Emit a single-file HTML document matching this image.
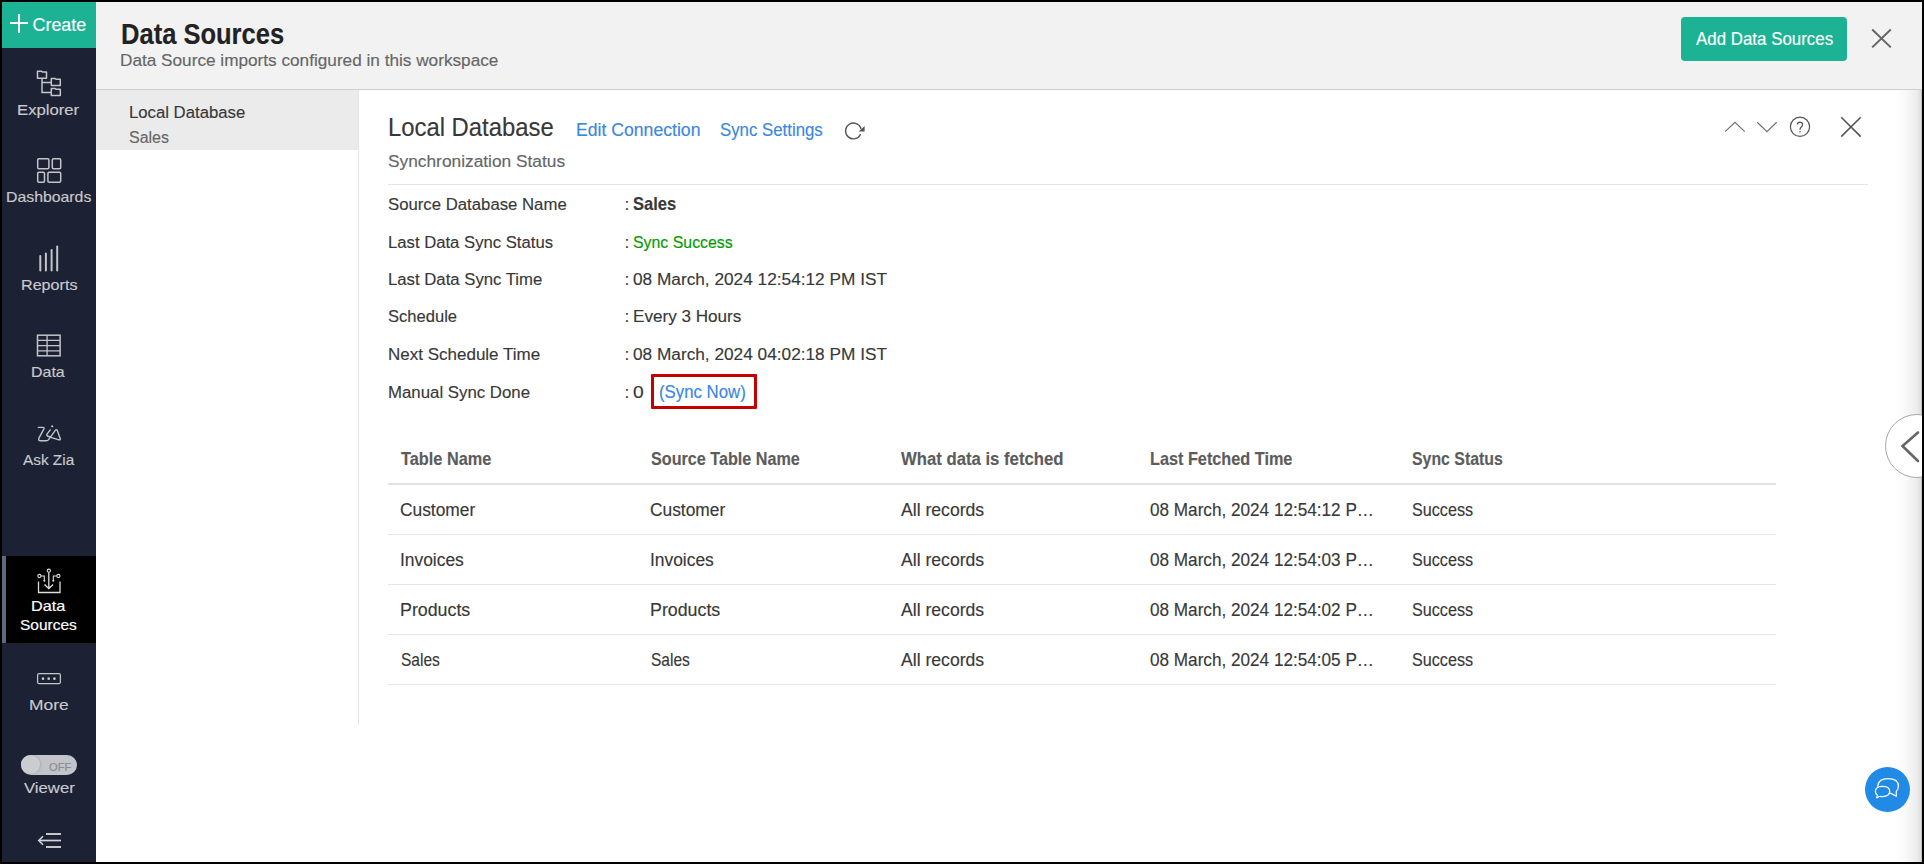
<!DOCTYPE html>
<html><head><meta charset="utf-8"><style>
html,body{margin:0;padding:0;width:1924px;height:864px;overflow:hidden;background:#fff;position:relative}
.t{position:absolute;font-family:"Liberation Sans",sans-serif;white-space:nowrap;transform-origin:0 0;-webkit-text-stroke:0.15px currentColor}
</style></head><body>
<div style="position:absolute;left:2px;top:2px;width:94px;height:860px;background:#1c2134"></div>
<div style="position:absolute;left:2px;top:2px;width:94px;height:46px;background:#1cb294"></div>
<div style="position:absolute;left:10px;top:22px;width:18px;height:2px;background:#fff"></div>
<div style="position:absolute;left:18px;top:14px;width:2px;height:19px;background:#fff"></div>
<div class="t" style="left:32.60px;top:17px;font-size:17.86px;line-height:17.86px;color:#fff;transform:scaleX(1.0000);">Create</div>
<div style="position:absolute;left:2px;top:556px;width:94px;height:87px;background:#000"></div>
<div style="position:absolute;left:2px;top:556px;width:4px;height:87px;background:#5b6b7c"></div>
<div class="t" style="left:17.15px;top:103px;font-size:14.51px;line-height:14.51px;color:#c9cacd;transform:scaleX(1.1509);">Explorer</div>
<div class="t" style="left:5.81px;top:190px;font-size:14.51px;line-height:14.51px;color:#c9cacd;transform:scaleX(1.0909);">Dashboards</div>
<div class="t" style="left:20.85px;top:278px;font-size:14.09px;line-height:14.09px;color:#c9cacd;transform:scaleX(1.1458);">Reports</div>
<div class="t" style="left:31.40px;top:365px;font-size:14.51px;line-height:14.51px;color:#c9cacd;transform:scaleX(1.1000);">Data</div>
<div class="t" style="left:22.80px;top:453px;font-size:14.65px;line-height:14.65px;color:#c9cacd;transform:scaleX(1.0490);">Ask Zia</div>
<div class="t" style="left:31.28px;top:599px;font-size:14.51px;line-height:14.51px;color:#fff;transform:scaleX(1.1200);">Data</div>
<div class="t" style="left:20.33px;top:618px;font-size:14.51px;line-height:14.51px;color:#fff;transform:scaleX(1.0692);">Sources</div>
<div class="t" style="left:28.64px;top:697px;font-size:15.07px;line-height:15.07px;color:#c9cacd;transform:scaleX(1.1576);">More</div>
<div class="t" style="left:23.50px;top:781px;font-size:14.51px;line-height:14.51px;color:#c9cacd;transform:scaleX(1.1523);">Viewer</div>
<svg style="position:absolute;left:0;top:0" width="96" height="864" fill="none" stroke="#c4c5c9" stroke-width="1.5">
<!-- explorer -->
<path d="M37.5 78.3V71.3H41.5L42.3 72H46.5V78.3Z" stroke-linejoin="round"/>
<path d="M51.3 85.5V78.6H55.3L56.1 79.3H60.3V85.5Z" stroke-linejoin="round"/>
<path d="M51.3 95.5V88.6H55.3L56.1 89.3H60.3V95.5Z" stroke-linejoin="round"/>
<path d="M42 78.5V92.5H51.5M42 82.5H51.5"/>
<!-- dashboards -->
<rect x="37.7" y="158.7" width="11.2" height="10" rx="1.2"/>
<rect x="52.3" y="158.7" width="8.4" height="10" rx="1.2"/>
<rect x="37.7" y="172.2" width="6.8" height="10" rx="1.2"/>
<rect x="47.9" y="172.2" width="12.8" height="10" rx="1.2"/>
<!-- reports -->
<path d="M40.3 256V270.5M45.9 253.5V270.5M51.6 250V270.5M57.2 246.5V270.5" stroke-width="2" stroke-linecap="round"/>
<!-- data -->
<rect x="37.5" y="335.2" width="22.6" height="20.6"/>
<path d="M37.5 340.3H60.1M37.5 345.6H60.1M37.5 350.8H60.1M47.1 335.2V355.8" stroke-width="1.3"/>
<!-- zia -->
<path d="M38.3 427.4H43Q44.6 427.4 43.9 428.9L38.9 438.2Q38.1 440.8 40.3 440.8H46.3Q47.7 440.8 48.6 439.6L55.3 430.4Q56.6 428.7 57.4 430.8L60.2 438.4Q60.8 440.3 58.9 439.8L50.9 437.3M50.3 429.9L47 434.1Q46.3 435.5 47.6 436L50.9 437.3" stroke-width="1.4" stroke-linejoin="round" stroke-linecap="round"/>
<circle cx="52.2" cy="426.3" r="1.1" fill="#c4c5c9" stroke="none"/>
<!-- data sources icon -->
<path d="M38.5 581.5V592.5H60V581.5" stroke="#ddd" stroke-width="1.3"/>
<path d="M48.8 572.5V588M44.5 584.5L48.8 588.5L53.1 584.5" stroke="#ddd" stroke-width="1.3"/>
<circle cx="48.8" cy="570.7" r="1.6" stroke="#ddd" stroke-width="1.1"/>
<circle cx="39.4" cy="576" r="1.6" stroke="#ddd" stroke-width="1.1"/>
<circle cx="58.4" cy="576" r="1.6" stroke="#ddd" stroke-width="1.1"/>
<path d="M41 576H44.3V580.5M56.8 576H53.3V580.5" stroke="#ddd" stroke-width="1.1"/>
<circle cx="44.3" cy="580.7" r="1" fill="#ddd" stroke="none"/>
<circle cx="53.3" cy="580.7" r="1" fill="#ddd" stroke="none"/>
<!-- more -->
<rect x="37.6" y="673.7" width="22.8" height="10" rx="1.5" stroke-width="1.25"/>
<circle cx="43" cy="678.7" r="1.35" fill="#c4c5c9" stroke="none"/>
<circle cx="48.7" cy="678.7" r="1.35" fill="#c4c5c9" stroke="none"/>
<circle cx="54.4" cy="678.7" r="1.35" fill="#c4c5c9" stroke="none"/>
<!-- collapse -->
<path d="M46 834H61M46 847H61" stroke="#c6c7cb" stroke-width="2"/>
<path d="M39 840.5H61" stroke="#d4d5d8" stroke-width="1.7"/>
<path d="M43 836.3L38.8 840.5L43 844.7" stroke="#d4d5d8" stroke-width="1.6"/>
</svg>
<div style="position:absolute;left:21px;top:755px;width:56px;height:20px;border-radius:10px;background:#c3c4c9"></div>
<div style="position:absolute;left:21px;top:755px;width:19px;height:19px;border-radius:50%;background:#cbccd0;box-shadow:1px 0 2px rgba(0,0,0,0.12)"></div>
<div class="t" style="left:49.20px;top:762px;font-size:10.74px;line-height:10.74px;color:#8a8b90;transform:scaleX(1.0429);">OFF</div>
<div style="position:absolute;left:96px;top:2px;width:1826px;height:87px;background:#f2f2f2"></div>
<div style="position:absolute;left:96px;top:89px;width:1826px;height:1px;background:#cfcfcf"></div>
<div class="t" style="left:120.77px;top:19px;font-size:29.58px;line-height:29.58px;color:#222;font-weight:bold;transform:scaleX(0.8629);">Data Sources</div>
<div class="t" style="left:119.97px;top:53px;font-size:16.74px;line-height:16.74px;color:#666;transform:scaleX(1.0272);">Data Source imports configured in this workspace</div>
<div style="position:absolute;left:1681px;top:17px;width:166px;height:44px;border-radius:4px;background:#1cb294"></div>
<div class="t" style="left:1695.60px;top:31px;font-size:17.44px;line-height:17.44px;color:#fff;transform:scaleX(0.9688);">Add Data Sources</div>
<svg style="position:absolute;left:1860px;top:20px" width="40" height="40"><path d="M12.2 9.5L30.8 27.4M30.8 9.5L12.2 27.4" stroke="#666" stroke-width="2" fill="none"/></svg>
<div style="position:absolute;left:96px;top:90px;width:262px;height:60px;background:#ebebeb"></div>
<div style="position:absolute;left:358px;top:90px;width:1px;height:635px;background:#e6e6e6"></div>
<div class="t" style="left:129.23px;top:104px;font-size:17.16px;line-height:17.16px;color:#383838;transform:scaleX(0.9746);">Local Database</div>
<div class="t" style="left:129.08px;top:129px;font-size:17.3px;line-height:17.3px;color:#666;transform:scaleX(0.9238);">Sales</div>
<div style="position:absolute;left:1894px;top:90px;width:28px;height:772px;background:linear-gradient(to right,rgba(0,0,0,0) 0%,rgba(0,0,0,0.025) 40%,rgba(0,0,0,0.07) 80%,rgba(0,0,0,0.12) 95%,rgba(0,0,0,0.3) 100%)"></div>
<div class="t" style="left:388.20px;top:115px;font-size:25.12px;line-height:25.12px;color:#383838;transform:scaleX(0.9494);">Local Database</div>
<div class="t" style="left:575.59px;top:122px;font-size:17.44px;line-height:17.44px;color:#3a87e0;transform:scaleX(1.0107);">Edit Connection</div>
<div class="t" style="left:720.34px;top:122px;font-size:17.44px;line-height:17.44px;color:#3a87e0;transform:scaleX(0.9638);">Sync Settings</div>
<svg style="position:absolute;left:840px;top:115px" width="30" height="30" fill="none" stroke="#555" stroke-width="1.4">
<path d="M20.66 19.24A7.9 7.9 0 1 1 21.1 13.9"/><path d="M24.6 10.9L24.6 16.5L18.6 16.5Z" fill="#555" stroke="none"/></svg>
<div class="t" style="left:387.70px;top:153px;font-size:17.3px;line-height:17.3px;color:#666;transform:scaleX(1.0017);">Synchronization Status</div>
<div style="position:absolute;left:388px;top:184px;width:1480px;height:1px;background:#e3e3e3"></div>
<div class="t" style="left:388.03px;top:196px;font-size:17.3px;line-height:17.3px;color:#383838;transform:scaleX(0.9689);">Source Database Name</div>
<div class="t" style="left:388.03px;top:234px;font-size:17.3px;line-height:17.3px;color:#383838;transform:scaleX(0.9651);">Last Data Sync Status</div>
<div class="t" style="left:388.03px;top:271px;font-size:17.3px;line-height:17.3px;color:#383838;transform:scaleX(0.9677);">Last Data Sync Time</div>
<div class="t" style="left:388.04px;top:308px;font-size:17.3px;line-height:17.3px;color:#383838;transform:scaleX(0.9577);">Schedule</div>
<div class="t" style="left:388.02px;top:346px;font-size:17.3px;line-height:17.3px;color:#383838;transform:scaleX(0.9837);">Next Schedule Time</div>
<div class="t" style="left:388.03px;top:384px;font-size:17.3px;line-height:17.3px;color:#383838;transform:scaleX(0.9724);">Manual Sync Done</div>
<div class="t" style="left:624.50px;top:196px;font-size:17.3px;line-height:17.3px;color:#383838;transform:scaleX(1.0000);">:</div>
<div class="t" style="left:624.50px;top:234px;font-size:17.3px;line-height:17.3px;color:#383838;transform:scaleX(1.0000);">:</div>
<div class="t" style="left:624.50px;top:271px;font-size:17.3px;line-height:17.3px;color:#383838;transform:scaleX(1.0000);">:</div>
<div class="t" style="left:624.50px;top:308px;font-size:17.3px;line-height:17.3px;color:#383838;transform:scaleX(1.0000);">:</div>
<div class="t" style="left:624.50px;top:346px;font-size:17.3px;line-height:17.3px;color:#383838;transform:scaleX(1.0000);">:</div>
<div class="t" style="left:624.50px;top:384px;font-size:17.3px;line-height:17.3px;color:#383838;transform:scaleX(1.0000);">:</div>
<div class="t" style="left:632.96px;top:196px;font-size:17.58px;line-height:17.58px;color:#383838;font-weight:bold;transform:scaleX(0.9386);">Sales</div>
<div class="t" style="left:632.98px;top:234px;font-size:17.3px;line-height:17.3px;color:#009a00;transform:scaleX(0.9187);">Sync Success</div>
<div class="t" style="left:632.80px;top:271px;font-size:17.3px;line-height:17.3px;color:#383838;transform:scaleX(0.9976);">08 March, 2024 12:54:12 PM IST</div>
<div class="t" style="left:633.21px;top:308px;font-size:17.3px;line-height:17.3px;color:#383838;transform:scaleX(0.9898);">Every 3 Hours</div>
<div class="t" style="left:632.80px;top:346px;font-size:17.3px;line-height:17.3px;color:#383838;transform:scaleX(0.9976);">08 March, 2024 04:02:18 PM IST</div>
<div class="t" style="left:632.89px;top:384px;font-size:17.3px;line-height:17.3px;color:#383838;transform:scaleX(1.1125);">0</div>
<div style="position:absolute;left:651px;top:374px;width:100px;height:29px;border:3px solid #c50000;border-radius:1px"></div>
<div class="t" style="left:659.16px;top:384px;font-size:17.86px;line-height:17.86px;color:#3a87e0;transform:scaleX(0.9400);">(Sync Now)</div>
<svg style="position:absolute;left:1715px;top:105px" width="160" height="45" fill="none" stroke="#666" stroke-width="1.2">
<path d="M10.1 26.6L20 17.3L29.8 26.6" stroke="#707070"/>
<path d="M42.2 17.3L52 26.6L61.7 17.3" stroke="#707070"/>
<circle cx="85" cy="21.8" r="9.6" stroke="#555"/>
<path d="M82.4 19.6Q82.4 17.1 85 17.1Q87.6 17.1 87.6 19.6Q87.6 21.3 85.8 22.4Q85 23 85 24.8" stroke="#555" stroke-width="1.3"/>
<circle cx="85" cy="26.8" r="0.8" fill="#555" stroke="none"/>
<path d="M126.2 12.3L145.7 31.6M145.7 12.3L126.2 31.6" stroke="#555" stroke-width="1.6"/>
</svg>
<div class="t" style="left:401.40px;top:450px;font-size:18.84px;line-height:18.84px;color:#5c5c5c;font-weight:bold;transform:scaleX(0.8663);">Table Name</div>
<div class="t" style="left:650.54px;top:450px;font-size:18.84px;line-height:18.84px;color:#5c5c5c;font-weight:bold;transform:scaleX(0.8581);">Source Table Name</div>
<div class="t" style="left:900.50px;top:450px;font-size:18.84px;line-height:18.84px;color:#5c5c5c;font-weight:bold;transform:scaleX(0.8874);">What data is fetched</div>
<div class="t" style="left:1150.34px;top:450px;font-size:18.84px;line-height:18.84px;color:#5c5c5c;font-weight:bold;transform:scaleX(0.8632);">Last Fetched Time</div>
<div class="t" style="left:1412.46px;top:450px;font-size:18.84px;line-height:18.84px;color:#5c5c5c;font-weight:bold;transform:scaleX(0.8425);">Sync Status</div>
<div style="position:absolute;left:388px;top:483px;width:1388px;height:2px;background:#e2e2e2"></div>
<div class="t" style="left:400.42px;top:502px;font-size:17.72px;line-height:17.72px;color:#383838;transform:scaleX(0.9803);">Customer</div>
<div class="t" style="left:650.42px;top:502px;font-size:17.72px;line-height:17.72px;color:#383838;transform:scaleX(0.9803);">Customer</div>
<div class="t" style="left:900.50px;top:502px;font-size:17.72px;line-height:17.72px;color:#383838;transform:scaleX(0.9940);">All records</div>
<div class="t" style="left:1150.23px;top:502px;font-size:17.72px;line-height:17.72px;color:#383838;transform:scaleX(0.9684);">08 March, 2024 12:54:12 P…</div>
<div class="t" style="left:1412.39px;top:502px;font-size:17.72px;line-height:17.72px;color:#383838;transform:scaleX(0.9123);">Success</div>
<div style="position:absolute;left:388px;top:534px;width:1388px;height:1px;background:#e6e6e6"></div>
<div class="t" style="left:400.34px;top:552px;font-size:17.72px;line-height:17.72px;color:#383838;transform:scaleX(0.9823);">Invoices</div>
<div class="t" style="left:650.34px;top:552px;font-size:17.72px;line-height:17.72px;color:#383838;transform:scaleX(0.9823);">Invoices</div>
<div class="t" style="left:900.50px;top:552px;font-size:17.72px;line-height:17.72px;color:#383838;transform:scaleX(0.9940);">All records</div>
<div class="t" style="left:1150.23px;top:552px;font-size:17.72px;line-height:17.72px;color:#383838;transform:scaleX(0.9684);">08 March, 2024 12:54:03 P…</div>
<div class="t" style="left:1412.39px;top:552px;font-size:17.72px;line-height:17.72px;color:#383838;transform:scaleX(0.9123);">Success</div>
<div style="position:absolute;left:388px;top:584px;width:1388px;height:1px;background:#e6e6e6"></div>
<div class="t" style="left:400.39px;top:602px;font-size:17.72px;line-height:17.72px;color:#383838;transform:scaleX(1.0059);">Products</div>
<div class="t" style="left:650.39px;top:602px;font-size:17.72px;line-height:17.72px;color:#383838;transform:scaleX(1.0059);">Products</div>
<div class="t" style="left:900.50px;top:602px;font-size:17.72px;line-height:17.72px;color:#383838;transform:scaleX(0.9940);">All records</div>
<div class="t" style="left:1150.23px;top:602px;font-size:17.72px;line-height:17.72px;color:#383838;transform:scaleX(0.9684);">08 March, 2024 12:54:02 P…</div>
<div class="t" style="left:1412.39px;top:602px;font-size:17.72px;line-height:17.72px;color:#383838;transform:scaleX(0.9123);">Success</div>
<div style="position:absolute;left:388px;top:634px;width:1388px;height:1px;background:#e6e6e6"></div>
<div class="t" style="left:400.52px;top:652px;font-size:17.72px;line-height:17.72px;color:#383838;transform:scaleX(0.8767);">Sales</div>
<div class="t" style="left:650.52px;top:652px;font-size:17.72px;line-height:17.72px;color:#383838;transform:scaleX(0.8767);">Sales</div>
<div class="t" style="left:900.50px;top:652px;font-size:17.72px;line-height:17.72px;color:#383838;transform:scaleX(0.9940);">All records</div>
<div class="t" style="left:1150.23px;top:652px;font-size:17.72px;line-height:17.72px;color:#383838;transform:scaleX(0.9684);">08 March, 2024 12:54:05 P…</div>
<div class="t" style="left:1412.39px;top:652px;font-size:17.72px;line-height:17.72px;color:#383838;transform:scaleX(0.9123);">Success</div>
<div style="position:absolute;left:388px;top:684px;width:1388px;height:1px;background:#e6e6e6"></div>
<div style="position:absolute;left:1885px;top:414px;width:64px;height:64px;box-sizing:border-box;border-radius:50%;border:1px solid #a8a8a8;background:#fff"></div>
<svg style="position:absolute;left:1890px;top:425px" width="40" height="45"><path d="M28 7.5L12.5 21L28 36" stroke="#666" stroke-width="2.6" fill="none" stroke-linecap="round"/></svg>
<div style="position:absolute;left:1865px;top:767px;width:45px;height:45px;border-radius:50%;background:#2189e6"></div>
<svg style="position:absolute;left:1865px;top:767px" width="45" height="45" viewBox="1865 767 45 45" fill="none" stroke="#fff" stroke-width="1.25" stroke-linejoin="round">
<path d="M1877.6 786.5Q1878.2 778.6 1888 778.6Q1898.4 778.6 1898.4 786Q1898.4 789.6 1896.2 791.8L1896.4 796.3L1891.4 793.6L1889.9 793.2"/>
<path d="M1880 796.3Q1881.5 796.5 1882.6 796.5Q1889.7 796.5 1889.7 791.3Q1889.7 786.3 1882.5 786.3Q1875.4 786.3 1875.4 791.3Q1875.4 794 1877.4 795.3L1876.7 797.8Z"/>
</svg>
<div style="position:absolute;left:0;top:0;width:1924px;height:864px;box-sizing:border-box;border:2px solid #000;pointer-events:none"></div>
</body></html>
